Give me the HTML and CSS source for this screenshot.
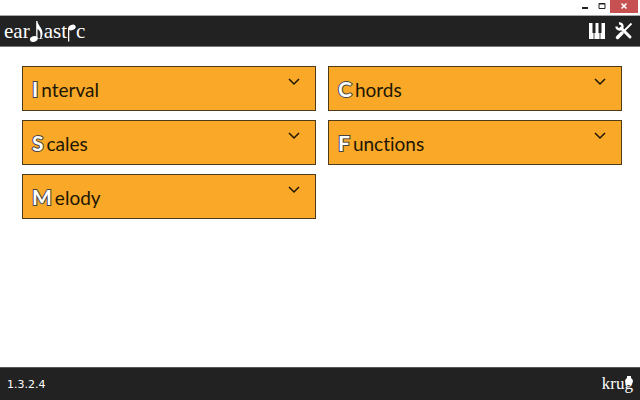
FILE: index.html
```html
<!DOCTYPE html>
<html lang="en">
<head>
<meta charset="utf-8">
<meta name="viewport" content="width=device-width, initial-scale=1">
<title>Eartastic</title>
<link rel="stylesheet" href="styles.css">
</head>
<body>

<div class="titlebar">
  <button class="win" aria-label="Minimize"><svg width="8" height="12"><path d="M1 8h6" stroke="#222" stroke-width="2"/></svg></button>
  <button class="win" aria-label="Maximize"><svg width="8" height="12"><path d="M1 3.500h6v5h-6zM1 4h6" fill="none" stroke="#222"/></svg></button>
  <button class="win close" aria-label="Close"><svg width="8" height="12"><path d="M1.500 3.500l5 5M6.500 3.500l-5 5" stroke="#fff" stroke-width="1.500"/></svg></button>
</div>

<header class="topbar">
  <h1 class="logo">
    <span>ear</span>
    <svg width="14" height="24" viewBox="0 0 14 24" fill="#fff">
      <ellipse cx="3.800" cy="20" rx="4" ry="2.800" transform="rotate(-20 3.800 20)"/>
      <path d="M6.200 2h1.300c0 4 5 7 5 12 0 2-.5 4-1.500 5.500h2V20H8v-.5h2c1-4 .5-8-2.500-9.500V20H6.200z"/>
    </svg>
    <span>ast</span>
    <svg width="9" height="24" viewBox="0 0 9 24" fill="#fff">
      <ellipse cx="5" cy="8.500" rx="3.800" ry="2.600" transform="rotate(-20 5 8.500)"/>
      <path d="M1 9h1.300v13.500H1z"/>
    </svg>
    <span>c</span>
  </h1>
  <nav class="tools">
    <button aria-label="Piano">
      <svg width="16" height="18" viewBox="0 0 16 18">
        <path d="M0 1h16v16H0z" fill="#fff"/>
        <path d="M3.500 1h3v10h-3zM9.500 1h3v10h-3z" fill="#222"/>
        <path d="M5 10v7M11 10v7" stroke="#222" stroke-width=".8"/>
      </svg>
    </button>
    <button aria-label="Settings">
      <svg width="18" height="18" viewBox="0 0 18 18" fill="none" stroke="#fff">
        <path d="M6 6l9 9" stroke-width="3" stroke-linecap="round"/>
        <path d="M4 1.500A3 3 0 1 1 1.500 4.500" stroke-width="2.400"/>
        <path d="M16.500 1.500l-7 7" stroke-width="1.800"/>
        <path d="M7 11l-4.500 4.500" stroke-width="3.500" stroke-linecap="round"/>
      </svg>
    </button>
  </nav>
</header>

<main class="menu">
  <button class="card"><b>I</b><span>nterval</span><svg class="arrow" width="12" height="8"><path d="M1 1l5 5 5-5"/></svg></button>
  <button class="card"><b>C</b><span>hords</span><svg class="arrow" width="12" height="8"><path d="M1 1l5 5 5-5"/></svg></button>
  <button class="card"><b>S</b><span>cales</span><svg class="arrow" width="12" height="8"><path d="M1 1l5 5 5-5"/></svg></button>
  <button class="card"><b>F</b><span>unctions</span><svg class="arrow" width="12" height="8"><path d="M1 1l5 5 5-5"/></svg></button>
  <button class="card"><b>M</b><span>elody</span><svg class="arrow" width="12" height="8"><path d="M1 1l5 5 5-5"/></svg></button>
</main>

<footer class="bottombar">
  <span class="version">1.3.2.4</span>
  <span class="brand">kru<span class="jug">g<svg width="8" height="10" viewBox="0 0 8 10" fill="#fff"><path d="M2 0h4v2c3 2 2 5 0 7H2C0 7-1 4 2 2z"/></svg></span></span>
</footer>

</body>
</html>
```
FILE: styles.css
```css
* {
  box-sizing: border-box;
}

body {
  margin: 0;
  min-height: 100vh;
  display: flex;
  flex-direction: column;
  background: #fff;
  font-family: Lato, "Century Gothic", sans-serif;
}

button {
  margin: 0;
  padding: 0;
  border: 0;
  background: none;
  color: inherit;
  font: inherit;
  cursor: pointer;
}

svg {
  display: block;
}

/* window buttons */
.titlebar {
  display: flex;
  justify-content: flex-end;
  height: 15px;
  padding-right: 2px;
}

.win {
  display: flex;
  justify-content: center;
  width: 17px;
}

.close {
  width: 28px;
  height: 13px;
  background: #c75050;
}

/* header */
.topbar {
  display: flex;
  align-items: center;
  justify-content: space-between;
  height: 32px;
  padding: 0 7px 0 4px;
  background: #222;
  border-top: 1px solid #aaa;
  border-bottom: 1px solid #777;
  color: #fff;
}

.logo {
  display: flex;
  align-items: center;
  margin: 0;
  font: 21px/24px "Liberation Serif", serif;
}

.tools {
  display: flex;
  gap: 10px;
}

/* exercise list */
.menu {
  flex: 1;
  display: grid;
  grid-template-columns: 1fr 1fr;
  align-content: start;
  gap: 9px 12px;
  padding: 19px 18px 19px 22px;
}

.card {
  display: flex;
  align-items: baseline;
  height: 45px;
  padding: 0 15px 0 9px;
  background: #f9a828;
  border: 1px solid #4d3a18;
  color: #201604;
  font-size: 19px;
  font-variant-ligatures: none;
  line-height: 44px;
}

.card b {
  margin-right: 3px;
  color: #fff;
  font-size: 21px;
  -webkit-text-stroke: 2px #444;
  paint-order: stroke fill;
}

.arrow {
  align-self: flex-start;
  margin: 11px 0 0 auto;
  fill: none;
  stroke: #201604;
  stroke-width: 1.5;
}

/* footer */
.bottombar {
  display: flex;
  align-items: center;
  justify-content: space-between;
  height: 33px;
  padding: 0 7px;
  background: #222;
  border-top: 1px solid #555;
  color: #fff;
}

.version {
  font: 11px "DejaVu Sans", sans-serif;
}

.brand {
  font: 17px "Liberation Serif", serif;
}

.jug {
  position: relative;
}

.jug svg {
  position: absolute;
  top: 2px;
  right: 0;
}
```
